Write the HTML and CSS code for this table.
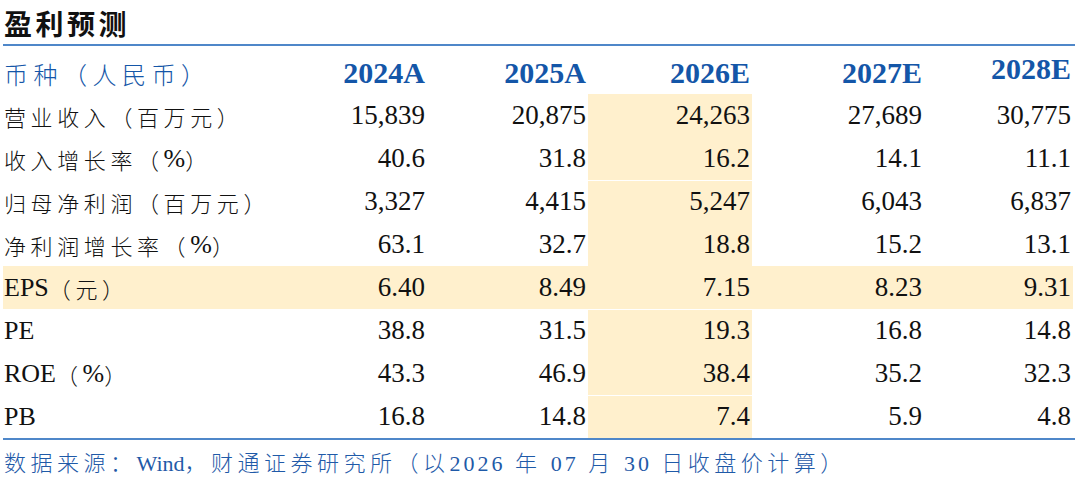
FILE: index.html
```html
<!DOCTYPE html>
<html lang="zh-CN">
<head>
<meta charset="utf-8">
<title>盈利预测</title>
<link rel="stylesheet" href="styles.css">
</head>
<body>
<div class="report">
  <h1 class="title">盈利预测</h1>
  <div class="table">
    <div class="row head">
      <div class="cell label"><span class="cn">币种（人民币）</span></div>
      <div class="cell num">2024A</div>
      <div class="cell num">2025A</div>
      <div class="cell num">2026E</div>
      <div class="cell num">2027E</div>
      <div class="cell num raise">2028E</div>
    </div>
    <div class="row">
      <div class="cell label"><span class="cn">营业收入（百万元）</span></div>
      <div class="cell num">15,839</div>
      <div class="cell num">20,875</div>
      <div class="cell num hl">24,263</div>
      <div class="cell num">27,689</div>
      <div class="cell num">30,775</div>
    </div>
    <div class="row">
      <div class="cell label"><span class="cn">收入增长率（</span>%<span class="cn">）</span></div>
      <div class="cell num">40.6</div>
      <div class="cell num">31.8</div>
      <div class="cell num hl">16.2</div>
      <div class="cell num">14.1</div>
      <div class="cell num">11.1</div>
    </div>
    <div class="row">
      <div class="cell label"><span class="cn">归母净利润（百万元）</span></div>
      <div class="cell num">3,327</div>
      <div class="cell num">4,415</div>
      <div class="cell num hl sep">5,247</div>
      <div class="cell num">6,043</div>
      <div class="cell num">6,837</div>
    </div>
    <div class="row">
      <div class="cell label"><span class="cn">净利润增长率（</span>%<span class="cn">）</span></div>
      <div class="cell num">63.1</div>
      <div class="cell num">32.7</div>
      <div class="cell num hl">18.8</div>
      <div class="cell num">15.2</div>
      <div class="cell num">13.1</div>
    </div>
    <div class="row eps">
      <div class="cell label">EPS<span class="cn">（元）</span></div>
      <div class="cell num">6.40</div>
      <div class="cell num">8.49</div>
      <div class="cell num hl">7.15</div>
      <div class="cell num">8.23</div>
      <div class="cell num">9.31</div>
    </div>
    <div class="row">
      <div class="cell label">PE</div>
      <div class="cell num">38.8</div>
      <div class="cell num">31.5</div>
      <div class="cell num hl sep">19.3</div>
      <div class="cell num">16.8</div>
      <div class="cell num">14.8</div>
    </div>
    <div class="row">
      <div class="cell label">ROE<span class="cn">（</span>%<span class="cn">）</span></div>
      <div class="cell num">43.3</div>
      <div class="cell num">46.9</div>
      <div class="cell num hl">38.4</div>
      <div class="cell num">35.2</div>
      <div class="cell num">32.3</div>
    </div>
    <div class="row">
      <div class="cell label">PB</div>
      <div class="cell num">16.8</div>
      <div class="cell num">14.8</div>
      <div class="cell num hl sep">7.4</div>
      <div class="cell num">5.9</div>
      <div class="cell num">4.8</div>
    </div>
  </div>
  <p class="source">数据来源：<span class="en">Wind</span>，财通证券研究所（以<span class="dg">2026</span> 年 <span class="dg">07</span> 月 <span class="dg">30</span> 日收盘价计算）</p>
</div>
</body>
</html>
```

FILE: styles.css
```css
html, body {
  margin: 0;
  padding: 0;
  background: #ffffff;
}

body {
  font-family: "Liberation Serif", "Noto Sans CJK SC", serif;
  color: #111111;
}

.report {
  width: 1072px;
  margin-left: 3px;
}

.title {
  margin: 0;
  height: 44px;
  padding-left: 1px;
  padding-top: 1px;
  box-sizing: border-box;
  font-family: "Noto Sans CJK SC", sans-serif;
  font-weight: 700;
  font-size: 28px;
  line-height: 44px;
  letter-spacing: 3.5px;
  color: #111111;
}

.table {
  border-top: 2px solid #4f87c9;
  border-bottom: 2px solid #4f87c9;
}

.row {
  display: grid;
  grid-template-columns: 257px 167px 161px 164px 172px 149px;
  height: 43px;
}

.row.head {
  height: 48px;
}

.cell {
  display: flex;
  align-items: center;
  white-space: nowrap;
}

.cell.label {
  padding-left: 1px;
  font-size: 26px;
}

.cell.num {
  justify-content: flex-end;
  padding-right: 2px;
  font-size: 27px;
}

.cn {
  font-family: "Noto Sans CJK SC", sans-serif;
  font-weight: 300;
  font-size: 22px;
  letter-spacing: 4.6px;
}

.head .cell {
  padding-top: 6px;
  color: #1456a8;
}

.head .cell.num {
  font-weight: 700;
  font-size: 30px;
}

.head .cn {
  font-size: 24px;
  letter-spacing: 5.5px;
}

.head .cell.raise {
  padding-top: 0;
  padding-bottom: 2px;
}

.hl,
.row.eps .cell {
  background: #fff0cd;
}

.sep {
  box-shadow: inset 0 1px 0 #ffffff;
}

.source {
  margin: 0;
  padding-left: 1px;
  font-family: "Noto Sans CJK SC", sans-serif;
  font-weight: 300;
  font-size: 22px;
  line-height: 42px;
  letter-spacing: 4.5px;
  color: #1f5aa8;
  white-space: nowrap;
}

.source .en,
.source .dg {
  font-family: "Liberation Serif", serif;
  font-weight: 400;
}

.source .en {
  letter-spacing: 0;
}

.source .dg {
  letter-spacing: 3px;
}
```
